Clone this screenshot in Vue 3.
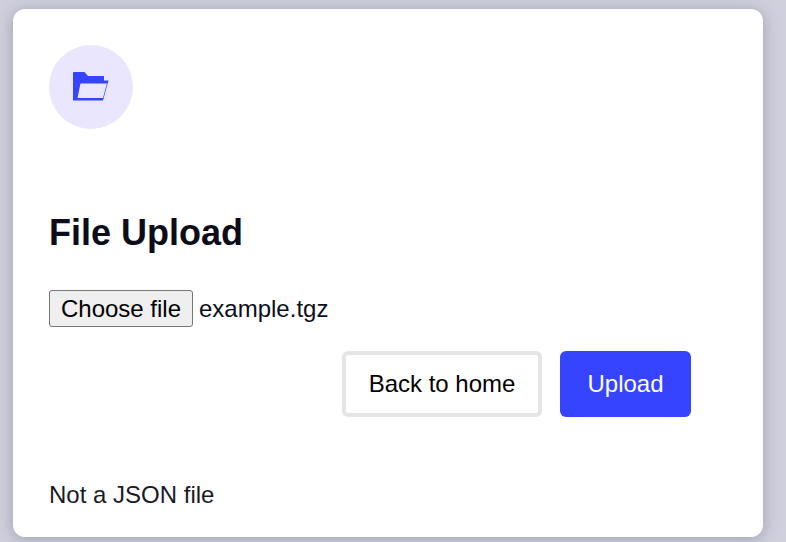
<script setup>
const fileName = 'example.tgz'
</script>

<template>
  <main class="page">
    <section class="card">
      <div class="badge">
        <svg width="36" height="30" viewBox="0 0 36 30" aria-hidden="true">
          <path fill="#3644ff" d="M0 1Q0 0 1 0H11.500L15 4H30.500Q31 4 31 4.500V8.500H35.500L30 28.500H0z" />
          <path fill="#e9e6fe" d="M7.500 11.500H34L30 26H4.500z" />
        </svg>
      </div>
      <h1 class="title">File Upload</h1>
      <div class="file-row">
        <button class="choose" type="button">Choose file</button>
        <span class="file-name">{{ fileName }}</span>
      </div>
      <div class="actions">
        <button class="btn secondary" type="button">Back to home</button>
        <button class="btn primary" type="button">Upload</button>
      </div>
      <p class="status">Not a JSON file</p>
    </section>
  </main>
</template>

<style>
html, body { margin: 0; background: #d0d0dd; }
</style>

<style scoped>
.page {
  width: 786px;
  height: 542px;
  box-sizing: border-box;
  padding: 9px 23px 5px 13px;
  background: #d0d0dd;
  overflow: hidden;
  font-family: "Liberation Sans", Arial, sans-serif;
}
.card {
  width: 750px;
  height: 528px;
  box-sizing: border-box;
  padding: 36px 36px 28px;
  background: #fff;
  border-radius: 12px;
  box-shadow: 0 2px 16px rgba(80, 80, 110, 0.4);
  display: flex;
  flex-direction: column;
}
.badge {
  width: 84px;
  height: 84px;
  border-radius: 50%;
  background: #e9e6fe;
  display: flex;
  align-items: center;
  justify-content: center;
}
.title {
  margin: 80px 0 0;
  font-size: 36px;
  line-height: 48px;
  font-weight: 700;
  color: #0d0d1a;
}
.file-row {
  margin-top: 33px;
  display: flex;
  align-items: center;
  gap: 6px;
  height: 37px;
}
.choose {
  width: 144px;
  height: 37px;
  padding: 0;
  box-sizing: border-box;
  font: 24px "Liberation Sans", Arial, sans-serif;
  color: #000;
  background: #efefef;
  border: 1px solid #767676;
  border-radius: 3px;
}
.file-name {
  font-size: 24px;
  color: #0d0d1a;
}
.actions {
  margin-top: 24px;
  padding-right: 36px;
  display: flex;
  justify-content: flex-end;
  gap: 18px;
}
.btn {
  height: 66px;
  box-sizing: border-box;
  font: 24px "Liberation Sans", Arial, sans-serif;
  border-radius: 6px;
}
.secondary {
  width: 200px;
  background: #fff;
  color: #000;
  border: 4px solid #e5e5e5;
}
.primary {
  width: 131px;
  background: #3644ff;
  color: #fff;
  border: 0;
}
.status {
  margin: auto 0 0;
  font-size: 24px;
  line-height: 28px;
  color: #1a1a26;
}
</style>
